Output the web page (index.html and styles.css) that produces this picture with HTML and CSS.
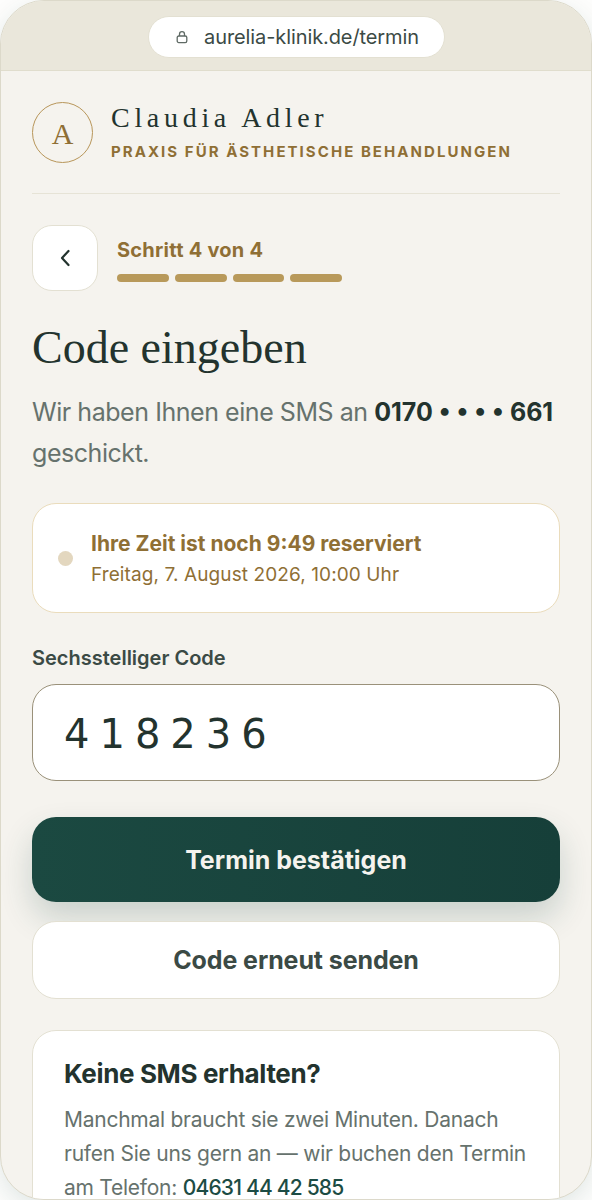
FILE: index.html
```html
<!DOCTYPE html>
<html lang="de">
<head>
<meta charset="utf-8">
<title>Termin</title>
<link rel="stylesheet" href="styles.css">
</head>
<body>
<div class="phone">
  <div class="bar">
    <div class="url">
      <svg class="lock" width="14" height="14" viewBox="0 0 14 14" fill="none" stroke="#5f6a65" stroke-width="1.3"><rect x="2.2" y="6" width="9.6" height="6.6" rx="1.6"/><path d="M4.5 6V4.2a2.5 2.5 0 0 1 5 0V6"/></svg>
      <span>aurelia-klinik.de/termin</span>
    </div>
  </div>
  <main class="content">
    <header class="brand">
      <div class="logo">A</div>
      <div class="brand-text">
        <div class="name">Claudia Adler</div>
        <div class="tag">PRAXIS FÜR ÄSTHETISCHE BEHANDLUNGEN</div>
      </div>
    </header>
    <div class="steps">
      <button class="back"><svg width="16" height="18" viewBox="0 0 16 18" fill="none" stroke="#23332e" stroke-width="2.2" stroke-linecap="round" stroke-linejoin="round"><path d="M11.5 2 L5 9 L11.5 16"/></svg></button>
      <div class="progress">
        <div class="step-label">Schritt 4 von 4</div>
        <div class="segs"><i></i><i></i><i></i><i></i></div>
      </div>
    </div>
    <h1>Code eingeben</h1>
    <p class="lead">Wir haben Ihnen eine SMS an <b>0170 • • • • 661</b> geschickt.</p>
    <div class="timer">
      <span class="dot"></span>
      <div class="timer-text">
        <div class="t1">Ihre Zeit ist noch 9:49 reserviert</div>
        <div class="t2">Freitag, 7. August 2026, 10:00 Uhr</div>
      </div>
    </div>
    <label class="lbl">Sechsstelliger Code</label>
    <div class="input">418236</div>
    <button class="primary">Termin bestätigen</button>
    <button class="secondary">Code erneut senden</button>
    <section class="help">
      <h2>Keine SMS erhalten?</h2>
      <p>Manchmal braucht sie zwei Minuten. Danach rufen Sie uns gern an — wir buchen den Termin am Telefon: <a>04631 44 42 585</a></p>
    </section>
  </main>
</div>
</body>
</html>
```
FILE: styles.css
```css
* { box-sizing: border-box; }
html, body { margin: 0; height: 1200px; overflow: hidden; background: #fdfdfc; }
body { font-family: Inter, "Noto Sans", sans-serif; color: #23332e; }
.phone { width: 592px; height: 1200px; border: 1px solid #dcd9ca; border-radius: 44px; overflow: hidden; background: #f5f3ee; box-shadow: 0 8px 24px rgba(28, 76, 68, 0.12); }
.bar { height: 70px; background: #eae7db; border-bottom: 1px solid #e0ddcd; display: flex; justify-content: center; align-items: center; padding-top: 2px; }
.url { width: 297px; height: 42px; background: #fff; border: 1px solid #e3e0d2; border-radius: 21px; display: flex; align-items: center; justify-content: center; gap: 15px; padding-left: 2px; font-size: 20px; letter-spacing: -0.1px; color: #3b4a45; }
.lock { width: 14px; height: 14px; }
.content { padding: 30px 31px 0; }
.brand { display: flex; gap: 18px; align-items: center; height: 93px; padding-bottom: 30px; border-bottom: 1px solid #e6e3d6; }
.logo { width: 61px; height: 61px; border: 1.5px solid #b8965a; border-radius: 50%; display: flex; align-items: center; justify-content: center; font-family: "Liberation Serif", serif; font-size: 30px; color: #8f6f35; padding-top: 4px; }
.brand-text { margin-top: 2px; }
.name { font-family: "Liberation Serif", serif; font-size: 28px; letter-spacing: 4.7px; line-height: 32px; color: #23332e; white-space: nowrap; margin-top: -3px; }
.tag { font-size: 15px; font-weight: 700; letter-spacing: 2.05px; color: #8f6f35; line-height: 20px; margin-top: 8px; white-space: nowrap; }
.steps { display: flex; gap: 19px; margin-top: 31px; align-items: flex-start; }
.back { width: 66px; height: 66px; background: #fff; border: 1px solid #e3e0d2; border-radius: 20px; padding: 0; display: flex; align-items: center; justify-content: center; }
.progress { padding-top: 12px; }
.step-label { font-size: 20px; font-weight: 700; line-height: 26px; color: #8f6f35; letter-spacing: 0.25px; }
.segs { display: flex; gap: 6px; margin-top: 11px; width: 225px; }
.segs i { display: block; flex: 1; height: 8px; border-radius: 4px; background: #b8995a; }
h1 { font-family: "Liberation Serif", serif; font-weight: 400; font-size: 46px; line-height: 56px; margin: 29px 0 0; color: #23332e; }
.lead { margin: 16px 0 0; font-size: 25px; line-height: 41px; color: #66726d; letter-spacing: -0.45px; }
.lead b { color: #23332e; font-weight: 700; letter-spacing: 0; }
.timer { margin-top: 29px; height: 110px; background: #fff; border: 1px solid #eadcbc; border-radius: 24px; display: flex; align-items: center; gap: 18px; padding-left: 25px; }
.timer-text { padding-top: 3px; }
.dot { width: 15px; height: 15px; border-radius: 50%; background: #e3d7bf; flex: none; }
.t1 { font-size: 21px; font-weight: 700; color: #8f6f35; line-height: 30px; }
.t2 { font-size: 19px; color: #8f6f35; line-height: 30px; letter-spacing: 0.1px; margin-top: 1px; }
.lbl { display: block; margin-top: 32px; font-size: 20px; font-weight: 600; color: #3b4a45; line-height: 26px; }
.input { margin-top: 13px; height: 97px; background: #fff; border: 1px solid #9a917a; border-radius: 24px; display: flex; align-items: center; padding: 3px 0 0 31px; font-family: "DejaVu Sans", sans-serif; font-size: 40px; letter-spacing: 10px; color: #23332e; }
button { font-family: inherit; display: block; width: 100%; }
.primary { margin-top: 36px; height: 85px; border: 0; border-radius: 24px; background: linear-gradient(90deg, #1b4941, #163f39); color: #f5f3ee; font-size: 25px; font-weight: 700; box-shadow: 0 16px 32px rgba(28, 76, 68, 0.2); }
.secondary { margin-top: 19px; height: 78px; background: #fff; border: 1px solid #e3e0d2; border-radius: 24px; color: #3b4a45; font-size: 25px; font-weight: 700; letter-spacing: -0.1px; }
.help { margin-top: 31px; background: #fff; border: 1px solid #e3e0d2; border-radius: 24px; padding: 25px 31px; }
h2 { margin: 0; font-size: 26px; font-weight: 700; line-height: 36px; color: #23332e; letter-spacing: -0.35px; }
.help p { margin: 11px 0 0; font-size: 21px; line-height: 34px; color: #66726d; letter-spacing: -0.25px; }
.help a { color: #1c4c44; font-weight: 500; letter-spacing: -0.8px; }
```
